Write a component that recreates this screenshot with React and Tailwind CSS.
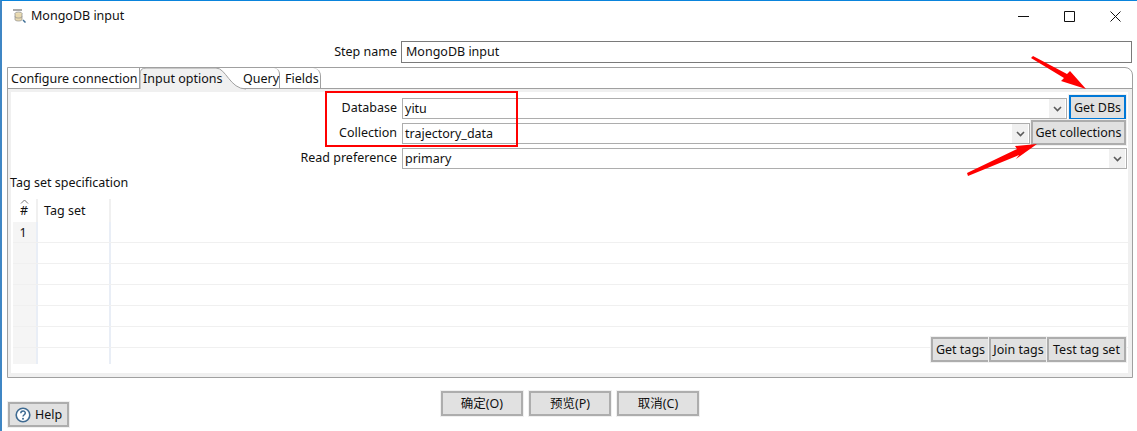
import React from 'react';

const Chevron = () => (
    <span className="flex items-center justify-center w-[16px] h-[19px] bg-[#f0f0f0] shrink-0">
        <svg width="9" height="6" viewBox="0 0 9 6" fill="none" stroke="#5a5a5a" strokeWidth="1.6">
            <path d="M1 1l3.5 3.5L8 1" />
        </svg>
    </span>
);

const Combo = ({ value, className }) => (
    <div className={`flex items-center justify-between h-[21px] bg-white border border-[#adadad] pl-[2px] pr-px text-[#111] ${className}`}>
        <span className="pt-px">{value}</span>
        <Chevron />
    </div>
);

const Btn = ({ children, className = '', focused = false }) => (
    <button className={`flex items-center justify-center pt-px bg-[#e1e1e1] border-2 outline outline-1 outline-[#f0f0f0] text-[#111] whitespace-nowrap ${focused ? 'border-[#0078d7]' : 'border-[#adadad]'} ${className}`}>
        {children}
    </button>
);

const Tab = ({ children, className = '' }) => (
    <div className={`flex items-center h-full pt-[3px] border-r border-[#a0a0a0] text-[#111] whitespace-nowrap ${className}`}>{children}</div>
);

const App = () => {
    const rows = [0, 1, 2, 3, 4, 5, 6];

    return (
        <div className="relative w-[1137px] h-[431px] overflow-hidden bg-white border-t border-l-2 border-t-[#0a84dc] border-l-[#3f86c4] text-[12.5px] font-['Noto_Sans','Noto_Sans_CJK_SC',sans-serif] leading-none">
            {/* title bar */}
            <div className="flex items-center h-[30px] pl-[10px]">
                <svg width="14" height="14" viewBox="0 0 14 14" className="mr-[5px]">
                    <rect x="1" y="0" width="9" height="2" fill="#a9a9a9" />
                    <ellipse cx="6.500" cy="4.500" rx="3.500" ry="1.500" fill="#f1e3bd" stroke="#8b8b8b" strokeWidth="0.7" />
                    <path d="M3 4.500v6c0 2 7 2 7 0v-6" fill="#e8d9b0" stroke="#8b8b8b" strokeWidth="0.7" />
                    <path d="M3 7.500c0 2 7 2 7 0" fill="none" stroke="#8b8b8b" strokeWidth="0.7" />
                    <path d="M11 11l2.500 2.500" stroke="#3f6f96" strokeWidth="1.500" />
                </svg>
                <span className="pt-px text-[#111]">MongoDB input</span>
                <div className="ml-auto flex items-center pr-[16px] gap-[35px]">
                    <svg width="11" height="11" viewBox="0 0 11 11" stroke="#111" fill="none"><path d="M0 5.500h11" /></svg>
                    <svg width="11" height="11" viewBox="0 0 11 11" stroke="#111" fill="none"><path d="M.5.500h10v10H.5z" /></svg>
                    <svg width="11" height="11" viewBox="0 0 11 11" stroke="#111" fill="none"><path d="M.5.500l10 10M10.500.500l-10 10" /></svg>
                </div>
            </div>

            {/* step name */}
            <div className="flex items-center h-[22px] mt-[10px] mr-[5px]">
                <label className="w-[395px] text-right text-[#111]">Step name</label>
                <div className="flex items-center flex-1 ml-[4px] h-full border border-[#7a7a7a] pl-[4px] text-[#111]">MongoDB input</div>
            </div>

            {/* tab folder */}
            <div className="mt-[4px] ml-[5px] mr-[4px] h-[311px] border border-[#a0a0a0] rounded-tr-[8px] flex flex-col">
                <div className="flex items-stretch h-[21px] border-b border-[#a0a0a0] shrink-0">
                    <Tab className="w-[132px] pl-[3px]">Configure connection</Tab>
                    <div className="relative flex items-center w-[106px] h-full pt-[3px] pl-[3px] text-[#111] whitespace-nowrap">
                        <svg width="106" height="22" viewBox="0 0 106 22" className="absolute left-0 top-0" fill="none">
                            <path d="M0 21V6Q0 0 6 0H76C86 0 90 21 106 21Z" fill="#f0f0f0" />
                            <path d="M0 21V6Q0 0 6 0H76C86 0 90 21 106 21" stroke="#a0a0a0" />
                        </svg>
                        <span className="relative">Input options</span>
                    </div>
                    <Tab className="relative w-[37px] -ml-[3px] rounded-tr-[6px]">Query</Tab>
                    <Tab className="w-[41px] pl-[5px] rounded-tr-[8px]">Fields</Tab>
                </div>

                <div className="flex-1 border-[#f0f0f0] border-t-[3px] border-l-[3px] border-r-[4px] border-b-[4px] flex flex-col min-h-0">
                    <div className="flex items-center h-[25px] mt-[3px] pr-[2px]">
                        <label className="w-[386px] pt-[2px] text-right text-[#111]">Database</label>
                        <Combo value="yitu" className="w-[665px] ml-[5px] mt-[2px]" />
                        <Btn focused className="ml-[2px] w-[57px] h-[25px]">Get DBs</Btn>
                    </div>
                    <div className="flex items-center h-[25px] pr-[2px]">
                        <label className="w-[386px] pt-[2px] text-right text-[#111]">Collection</label>
                        <Combo value="trajectory_data" className="w-[628px] ml-[5px] mt-[2px]" />
                        <Btn className="ml-px w-[95px] h-[25px]">Get collections</Btn>
                    </div>
                    <div className="flex items-center h-[25px] mt-px pr-px">
                        <label className="w-[386px] text-right text-[#111]">Read preference</label>
                        <Combo value="primary" className="flex-1 ml-[5px]" />
                    </div>

                    <div className="mt-[6px] -ml-px h-[14px] text-[#111]">Tag set specification</div>

                    {/* tag table */}
                    <div className="relative mt-[8px] ml-[2px] h-[165px] overflow-hidden flex flex-col">
                        <div className="flex h-[23px] shrink-0 text-[#111]">
                            <div className="relative w-[25px] flex items-end justify-center pb-[5px] pr-px border-r-2 border-[#f0f0f0]">
                                <svg width="9" height="5" viewBox="0 0 9 5" fill="none" stroke="#777" className="absolute top-0 left-[7px]"><path d="M1 4.500L4.500 1 8 4.500" /></svg>
                                #
                            </div>
                            <div className="w-[73px] flex items-end pb-[5px] pl-[6px] border-r-2 border-[#f0f0f0]">Tag set</div>
                        </div>
                        {rows.map((row) => (
                            <div key={row} className="flex h-[21px] shrink-0 border-b border-[#f0f0f0]">
                                <div className="w-[25px] pt-[3px] pr-[3px] bg-[#f5f5f5] border-r-2 border-[#e9eef6] flex items-center justify-center text-[#111]">
                                    {row === 0 ? '1' : ''}
                                </div>
                                <div className="w-[73px] border-r-2 border-[#e9eef6]" />
                            </div>
                        ))}
                        <div className="absolute right-[2px] bottom-[2px] flex">
                            <Btn className="w-[59px] h-[25px]">Get tags</Btn>
                            <Btn className="w-[59px] h-[25px] -ml-px">Join tags</Btn>
                            <Btn className="w-[79px] h-[25px] -ml-px">Test tag set</Btn>
                        </div>
                    </div>
                </div>
            </div>

            {/* dialog buttons */}
            <div className="flex justify-center gap-[6px] mt-[13px] pl-px">
                <Btn className="w-[82px] h-[25px]">确定(O)</Btn>
                <Btn className="w-[82px] h-[25px]">预览(P)</Btn>
                <Btn className="w-[82px] h-[25px]">取消(C)</Btn>
            </div>
            <div className="-mt-[14px] ml-[6px]">
                <Btn className="w-[61px] h-[25px] gap-[4px]">
                    <svg width="16" height="16" viewBox="0 0 16 16" fill="none">
                        <circle cx="8" cy="8" r="6.800" fill="#fff" stroke="#3f6b92" strokeWidth="1.600" />
                        <path d="M5.800 6.300c0-3 4.500-3 4.500-.3 0 1.800-2.300 1.700-2.300 3.600" stroke="#3f6b92" strokeWidth="1.500" />
                        <circle cx="8" cy="11.700" r="1" fill="#3f6b92" />
                    </svg>
                    Help
                </Btn>
            </div>

            {/* annotations */}
            <div className="absolute left-[323px] top-[90px] w-[193px] h-[56px] border-2 border-[#ff0000]" />
            <svg width="1137" height="431" viewBox="0 0 1137 431" className="absolute -left-[2px] -top-px pointer-events-none" fill="#ff0000">
                <polygon points="1031,58 1033,56 1067,74 1070,71 1086,89 1061,81 1064,78" />
                <polygon points="968,176 967,173 1017,149 1015,146 1037,144 1016,159 1019,155" />
            </svg>
        </div>
    );
};

export default App;
